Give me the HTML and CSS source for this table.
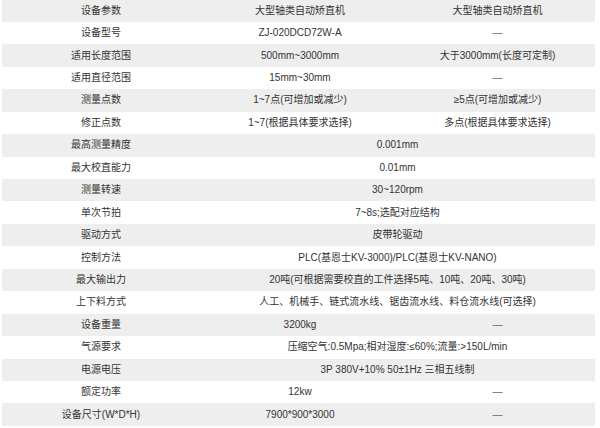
FILE: index.html
```html
<!DOCTYPE html>
<html lang="zh">
<head>
<meta charset="utf-8">
<link rel="stylesheet" href="styles.css">
</head>
<body>
<table class="spec">
  <colgroup><col class="c1"><col class="c2"><col class="c3"></colgroup>
  <tbody>
    <tr><td>设备参数</td><td>大型轴类自动矫直机</td><td>大型轴类自动矫直机</td></tr>
    <tr><td>设备型号</td><td>ZJ-020DCD72W-A</td><td class="dash">—</td></tr>
    <tr><td>适用长度范围</td><td>500mm~3000mm</td><td>大于3000mm(长度可定制)</td></tr>
    <tr><td>适用直径范围</td><td>15mm~30mm</td><td class="dash">—</td></tr>
    <tr><td>测量点数</td><td>1~7点(可增加或减少)</td><td>≥5点(可增加或减少)</td></tr>
    <tr><td>修正点数</td><td>1~7(根据具体要求选择)</td><td>多点(根据具体要求选择)</td></tr>
    <tr><td>最高测量精度</td><td colspan="2">0.001mm</td></tr>
    <tr><td>最大校直能力</td><td colspan="2">0.01mm</td></tr>
    <tr><td>测量转速</td><td colspan="2">30~120rpm</td></tr>
    <tr><td>单次节拍</td><td colspan="2">7~8s;选配对应结构</td></tr>
    <tr><td>驱动方式</td><td colspan="2">皮带轮驱动</td></tr>
    <tr><td>控制方法</td><td colspan="2">PLC(基恩士KV-3000)/PLC(基恩士KV-NANO)</td></tr>
    <tr><td>最大输出力</td><td colspan="2">20吨(可根据需要校直的工件选择5吨、10吨、20吨、30吨)</td></tr>
    <tr><td>上下料方式</td><td colspan="2">人工、机械手、链式流水线、锯齿流水线、料仓流水线(可选择)</td></tr>
    <tr><td>设备重量</td><td>3200kg</td><td class="dash">—</td></tr>
    <tr><td>气源要求</td><td colspan="2">压缩空气:0.5Mpa;相对湿度:≤60%;流量:&gt;150L/min</td></tr>
    <tr><td>电源电压</td><td colspan="2">3P 380V+10% 50±1Hz 三相五线制</td></tr>
    <tr><td>额定功率</td><td>12kw</td><td class="dash">—</td></tr>
    <tr><td>设备尺寸(W*D*H)</td><td>7900*900*3000</td><td class="dash">—</td></tr>
  </tbody>
</table>
</body>
</html>
```

FILE: styles.css
```css
html, body {
  margin: 0;
  padding: 0;
  background: #ffffff;
}

.spec {
  margin: -0.5px 0 0 2px;
  width: 593px;
  border-collapse: collapse;
  table-layout: fixed;
  font-family: "Liberation Sans", "Noto Sans CJK SC", sans-serif;
  font-size: 10px;
  color: #333333;
}

.c1 { width: 198px; }
.c2 { width: 200px; }
.c3 { width: 195px; }

.spec tr {
  height: 22.45px;
}

.spec tr:nth-child(odd) {
  background: #eeeeee;
}

.spec td {
  padding: 0;
  text-align: center;
  vertical-align: middle;
  white-space: nowrap;
  line-height: 12px;
}

.spec td.dash {
  color: #666666;
}
```
